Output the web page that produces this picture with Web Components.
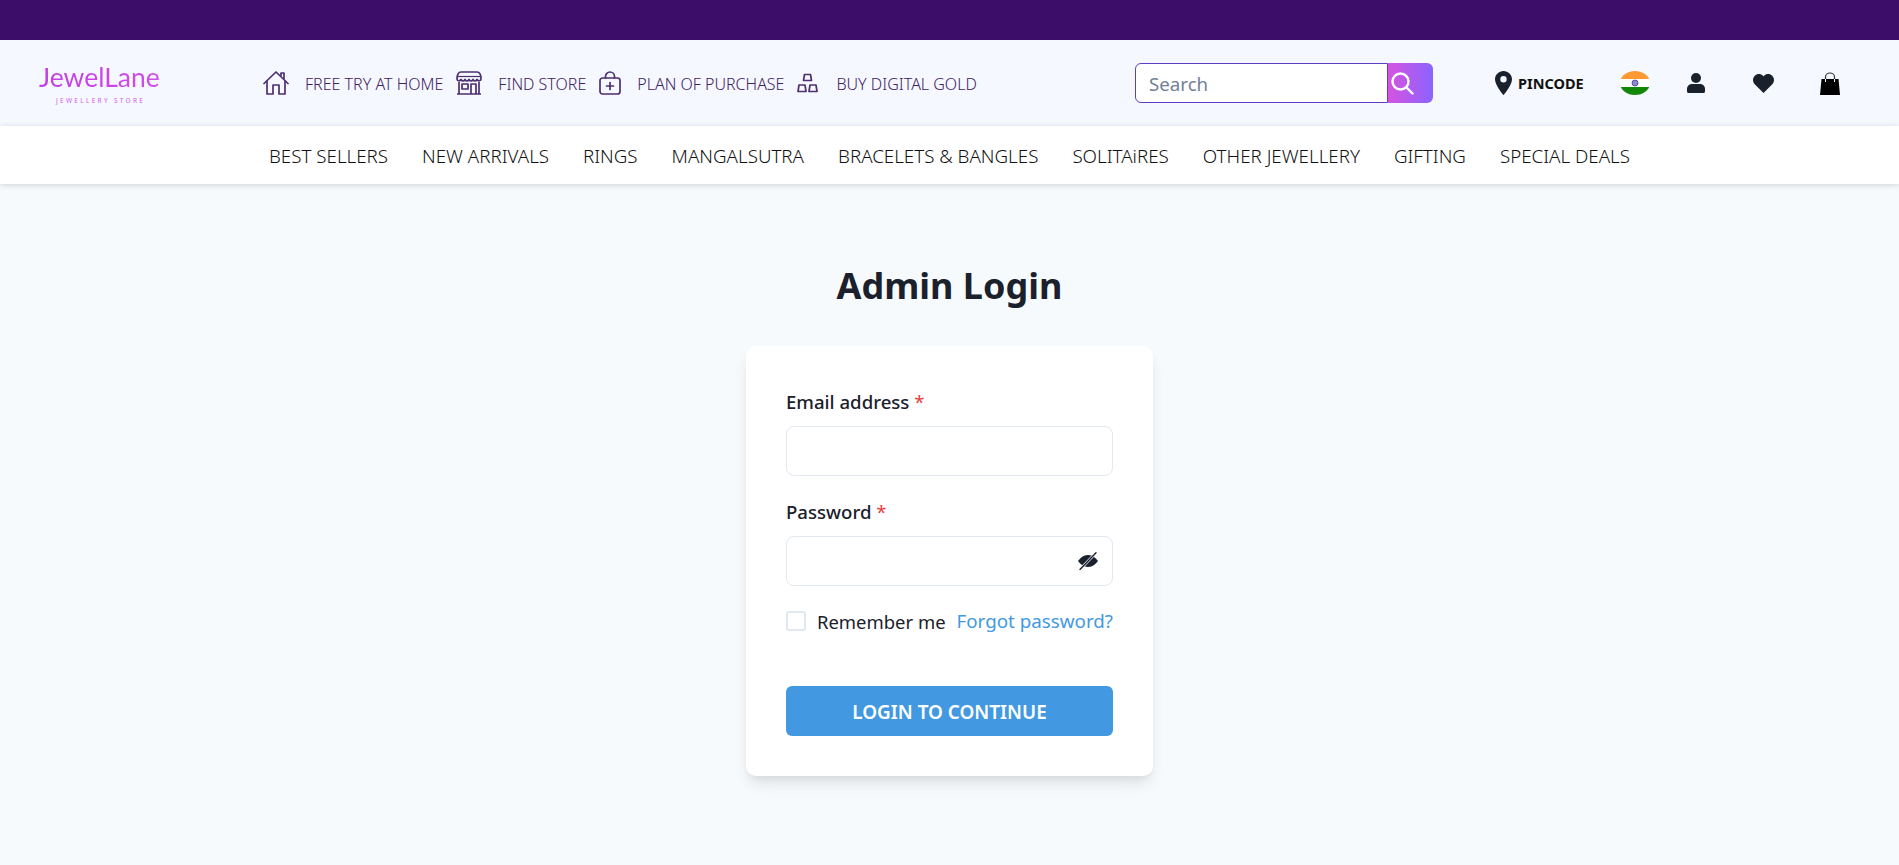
<!DOCTYPE html>
<html lang="en">
<head>
<meta charset="utf-8">
<title>Admin Login</title>
<style>
  html, body { margin: 0; padding: 0; }
  body { background: #f7fafc; font-family: "Noto Sans", "Open Sans", sans-serif; color: #1a202c; }
</style>
</head>
<body>
<site-header>
  <header-link label="FREE TRY AT HOME">
    <svg width="26" height="24" viewBox="0 0 26 24" fill="none" stroke="#4e2f72" stroke-width="1.7" stroke-linejoin="round" stroke-linecap="round"><path d="M1 12.5 13 1l12 11.500"/><path d="M4 10v13h6v-9h6v9h6V10"/><path d="M18 4.500V2h3v5.500"/></svg>
  </header-link>
  <header-link label="FIND STORE">
    <svg width="26" height="24" viewBox="0 0 26 24" fill="none" stroke="#4e2f72" stroke-width="1.7" stroke-linejoin="round"><path d="M5 1h16c2.500 0 4 2.500 4 7 0 2-3 2.500-4 .500-1 2-3 2-4 0-1 2-3 2-4 0-1 2-3 2-4 0-1 2-3 2-4 0-1 2-4 1.500-4-.5 0-4.500 1.500-7 4-7z"/><path d="M1 5.500h24" stroke-width="1.200"/><path d="M3 11v12h20V11M1 23h24"/><rect x="6" y="13" width="6" height="5"/><path d="M15 23V13h5v10"/></svg>
  </header-link>
  <header-link label="PLAN OF PURCHASE">
    <svg width="22" height="24" viewBox="0 0 22 24" fill="none" stroke="#4e2f72" stroke-width="1.700" stroke-linecap="round"><rect x="1" y="7" width="20" height="16" rx="2.500"/><path d="M6.500 7V5.500a4.500 4.500 0 0 1 9 0V7"/><path d="M11 11.500v7M7.500 15h7"/></svg>
  </header-link>
  <header-link label="BUY DIGITAL GOLD">
    <svg width="23" height="20" viewBox="0 0 23 20" fill="none" stroke="#4e2f72" stroke-width="1.700" stroke-linejoin="round"><path d="M7.500 1.500h6l1 6h-8z"/><path d="M2 12h6l1 6.500H1z"/><path d="M13 12h6l1 6.500h-8z"/></svg>
  </header-link>
</site-header>
<main-nav>
  <a>BEST SELLERS</a><a>NEW ARRIVALS</a><a>RINGS</a><a>MANGALSUTRA</a><a>BRACELETS &amp; BANGLES</a><a>SOLITAiRES</a><a>OTHER JEWELLERY</a><a>GIFTING</a><a>SPECIAL DEALS</a>
</main-nav>
<login-page></login-page>

<script>
  /**
   * Top purple strip plus the logo / links / search / account row.
   * Links are passed in through the default slot.
   */
  class SiteHeader extends HTMLElement {
    constructor() {
      super();
      this.attachShadow({ mode: "open" });
      this.shadowRoot.innerHTML = /*html*/ `
      <style>
        :host { display: block; }
        .strip { height: 40px; background: #3d0e69; }
        .row { height: 86px; background: #f5f8ff; display: flex; align-items: center; padding-left: 39px; box-sizing: border-box; }
        .logo { width: 224px; flex: none; display: flex; flex-direction: column; align-items: flex-start; }
        .logo b { font: 400 26.500px/30px Lato, sans-serif; background: linear-gradient(90deg, #c13fe6, #cf4de8); -webkit-background-clip: text; background-clip: text; color: transparent; }
        .logo small { font: 400 6.500px/9px "Noto Sans", sans-serif; letter-spacing: 2.300px; color: #d35ae9; margin: 4px 0 0 17px; }
        .links { display: flex; align-items: center; gap: 13px; width: 872px; flex: none; }
        .tools { display: flex; align-items: center; }
        .pin { display: flex; align-items: center; gap: 6px; margin-left: 62px; width: 125px; font: 700 14.500px "Noto Sans", sans-serif; color: #111; }
        .flag { width: 30px; height: 24px; border-radius: 50%; overflow: hidden; display: block; flex: none; }
        .user { margin-left: 37px; }
        .heart { margin-left: 48px; }
        .bag { margin-left: 46px; }
        svg { display: block; flex: none; }
      </style>
      <div class="strip"></div>
      <div class="row">
        <div class="logo"><b>JewelLane</b><small>JEWELLERY STORE</small></div>
        <div class="links"><slot></slot></div>
        <search-box></search-box>
        <div class="tools">
          <div class="pin">
            <svg width="17" height="24" viewBox="0 0 17 24"><path fill="#1a202c" fill-rule="evenodd" d="M8.500 0C3.800 0 0 3.700 0 8.400 0 14 8.500 24 8.500 24S17 14 17 8.400C17 3.700 13.200 0 8.500 0zm0 11.500a3.200 3.200 0 1 1 0-6.400 3.200 3.200 0 0 1 0 6.400z"/></svg>
            <span>PINCODE</span>
          </div>
          <svg class="flag" viewBox="0 0 30 24"><rect width="30" height="8" fill="#ff9933"/><rect y="8" width="30" height="8" fill="#fff"/><rect y="16" width="30" height="8" fill="#138808"/><circle cx="15" cy="12" r="3" fill="#8d8ac9" stroke="#3f3a96" stroke-width=".8"/></svg>
          <svg class="user" width="18" height="20" viewBox="0 0 18 20"><circle cx="9" cy="5" r="5" fill="#1a202c"/><path fill="#1a202c" d="M5 11h8c3 0 5 2.200 5 5v2.500c0 .8-.7 1.500-1.500 1.500h-15C.7 20 0 19.300 0 18.500V16c0-2.800 2-5 5-5z"/></svg>
          <svg class="heart" width="21" height="19" viewBox="0 0 21 19"><path fill="#1a202c" d="M10.500 19 1.700 10.200C-.6 7.800-.5 4 1.800 1.800 4.100-.5 7.700-.4 10 1.800l.5.600.5-.6c2.300-2.200 5.900-2.300 8.200 0 2.300 2.200 2.400 6 .1 8.400z"/></svg>
          <svg class="bag" width="20" height="23" viewBox="0 0 20 23"><path fill="#000" d="M1.500 7h17L20 23H0z"/><path fill="none" stroke="#333" stroke-width="1.200" d="M5.500 7V5a4.500 4 0 0 1 9 0v2"/><path fill="none" stroke="#fff" stroke-width="1" d="M5.500 7v3M14.500 7v3"/></svg>
        </div>
      </div>`;
    }
  }

  class HeaderLink extends HTMLElement {
    constructor() {
      super();
      this.attachShadow({ mode: "open" });
      this.shadowRoot.innerHTML = /*html*/ `
      <style>
        :host { display: flex; align-items: center; gap: 16px; font-size: 16px; font-weight: 300; color: #3f2160; white-space: nowrap; }
        span { padding-top: 1px; }
      </style>
      <slot></slot><span>${this.getAttribute("label")}</span>`;
    }
  }

  class SearchBox extends HTMLElement {
    constructor() {
      super();
      this.attachShadow({ mode: "open" });
      this.shadowRoot.innerHTML = /*html*/ `
      <style>
        :host { display: flex; width: 298px; height: 40px; flex: none; }
        input { width: 253px; box-sizing: border-box; border: 1px solid #5f3dc4; border-radius: 6px 0 0 6px; background: #fff; padding: 1px 13px 0; font: 18.700px "Noto Sans", sans-serif; outline: none; }
        input::placeholder { color: #718096; opacity: 1; }
        button { width: 45px; border: 0; padding: 0 0 0 2px; border-radius: 0 6px 6px 0; background: linear-gradient(90deg, #d654df, #8a63ff); display: flex; align-items: center; }
      </style>
      <input placeholder="Search">
      <button><svg width="24" height="24" viewBox="0 0 24 24" fill="none" stroke="#fff" stroke-width="2.400" stroke-linecap="round"><circle cx="10.500" cy="10.500" r="8"/><path d="m16.500 16.500 6 6"/></svg></button>`;
    }
  }

  class MainNav extends HTMLElement {
    constructor() {
      super();
      this.attachShadow({ mode: "open" });
      this.shadowRoot.innerHTML = /*html*/ `
      <style>
        :host { display: flex; justify-content: center; align-items: center; gap: 34px; height: 58px; box-sizing: border-box; padding-top: 1px; background: #fff; position: relative; box-shadow: 0 1px 6px rgba(0,0,0,.16); font-size: 18.750px; font-weight: 300; color: #111; white-space: nowrap; }
      </style>
      <slot></slot>`;
    }
  }

  class FormField extends HTMLElement {
    constructor() {
      super();
      this.attachShadow({ mode: "open" });
      this.shadowRoot.innerHTML = /*html*/ `
      <style>
        :host { display: block; }
        label { display: block; height: 32px; line-height: 32px; font-size: 18.600px; font-weight: 500; margin-bottom: 8px; color: #1a202c; }
        i { color: #e53e3e; font-style: normal; font-weight: 400; }
        .box { display: flex; align-items: center; height: 50px; box-sizing: border-box; border: 1px solid #e2e8f0; border-radius: 8px; background: #fff; padding-right: 14px; }
        input { flex: 1; min-width: 0; border: 0; outline: 0; background: none; height: 100%; padding: 0 16px; }
      </style>
      <label>${this.getAttribute("label")} <i>*</i></label>
      <div class="box"><input type="${this.getAttribute("type")}"><slot></slot></div>`;
    }
  }

  class LoginCard extends HTMLElement {
    constructor() {
      super();
      this.attachShadow({ mode: "open" });
      this.shadowRoot.innerHTML = /*html*/ `
      <style>
        :host { display: flex; flex-direction: column; gap: 20px; width: 407px; box-sizing: border-box; padding: 40px; background: #fff; border-radius: 10px; box-shadow: 0 10px 15px -3px rgba(0,0,0,.1), 0 4px 6px -2px rgba(0,0,0,.05); }
        .row { display: flex; align-items: center; justify-content: space-between; height: 30px; font-size: 18.450px; white-space: nowrap; }
        .check { display: flex; align-items: center; gap: 11px; }
        .check span { width: 20px; height: 20px; box-sizing: border-box; border: 2px solid #e2e8f0; border-radius: 3px; }
        a { color: #4299e1; font-size: 18.800px; }
        button { margin-top: 30px; height: 50px; padding: 2px 0 0; border: 0; border-radius: 6px; background: #4299e1; color: #fff; font: 600 18.900px "Noto Sans", sans-serif; }
      </style>
      <form-field label="Email address" type="email"></form-field>
      <form-field label="Password" type="password">
        <svg width="20" height="18" viewBox="0 0 20 18"><path fill="#1a202c" d="M10 3c4.800 0 8 3.300 10 6-2 2.700-5.200 6-10 6S2 11.700 0 9c2-2.700 5.200-6 10-6z"/><path stroke="#fff" stroke-width="2.600" d="M2 17.500 18 .800"/><path stroke="#1a202c" stroke-width="1.400" stroke-linecap="round" d="M2 17.500 18 .800"/></svg>
      </form-field>
      <div class="row">
        <div class="check"><span></span>Remember me</div>
        <a>Forgot password?</a>
      </div>
      <button>LOGIN TO CONTINUE</button>`;
    }
  }

  class LoginPage extends HTMLElement {
    constructor() {
      super();
      this.attachShadow({ mode: "open" });
      this.shadowRoot.innerHTML = /*html*/ `
      <style>
        :host { display: flex; flex-direction: column; align-items: center; padding-top: 80px; height: 681px; box-sizing: border-box; }
        h1 { margin: 0 0 38px; font-size: 36px; line-height: 44px; font-weight: 700; color: #1a202c; }
      </style>
      <h1>Admin Login</h1>
      <login-card></login-card>`;
    }
  }

  customElements.define("search-box", SearchBox);
  customElements.define("header-link", HeaderLink);
  customElements.define("site-header", SiteHeader);
  customElements.define("main-nav", MainNav);
  customElements.define("form-field", FormField);
  customElements.define("login-card", LoginCard);
  customElements.define("login-page", LoginPage);
</script>
</body>
</html>
